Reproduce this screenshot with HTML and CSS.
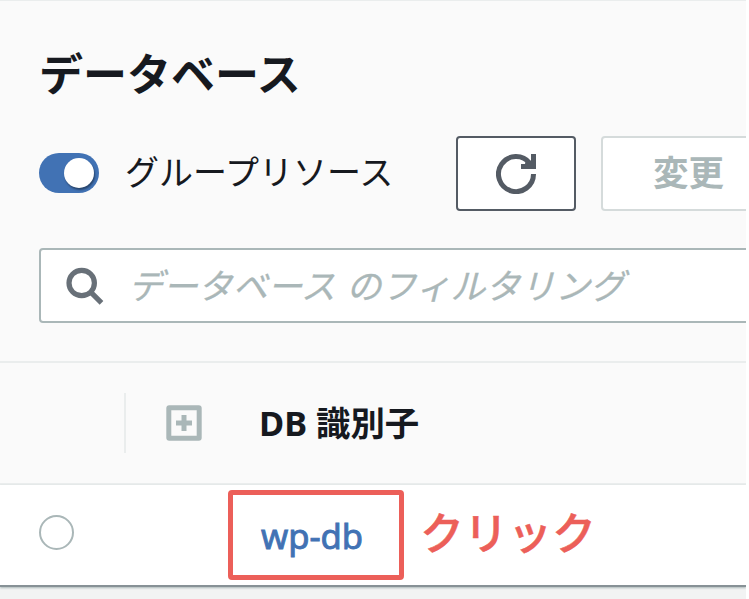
FILE: index.html
```html
<!DOCTYPE html>
<html lang="ja">
<head>
<meta charset="utf-8">
<title>データベース</title>
<link rel="stylesheet" href="styles.css">
</head>
<body>
<main class="panel">
  <header class="head">
    <h1 class="title">データベース</h1>
    <div class="actions">
      <span class="toggle"><span class="knob"></span></span>
      <span class="toggle-label">グループリソース</span>
      <button class="btn refresh" aria-label="更新">
        <svg width="40" height="40" viewBox="0 0 40 40" fill="none" stroke="#545b64" stroke-width="5">
          <path d="M37.5 20A17.5 17.5 0 1 1 33.8 9.3"/>
          <path d="M35 0H40V15H25V10H29L30 5L35 7Z" fill="#545b64" stroke="none"/>
        </svg>
      </button>
      <button class="btn modify" disabled>変更</button>
    </div>
    <div class="search">
      <svg class="search-icon" width="38" height="38" viewBox="0 0 38 38" fill="none" stroke="#687078" stroke-width="5.2">
        <circle cx="15.7" cy="16" r="12.7"/>
        <path d="M25 25.3L35.5 35.8"/>
      </svg>
      <span class="placeholder">データベース のフィルタリング</span>
    </div>
  </header>
  <div class="columns">
    <span class="divider"></span>
    <svg class="expand" width="36" height="36" viewBox="0 0 36 36" fill="none" stroke="#aab7b8" stroke-width="5">
      <rect x="2.8" y="2.8" width="30.4" height="30.4" rx=".5"/>
      <path d="M10 18H26M18 10V26"/>
    </svg>
    <span class="column-name">DB 識別子</span>
  </div>
  <div class="row">
    <span class="radio"></span>
    <a class="link">wp-db</a>
    <span class="note">クリック</span>
  </div>
</main>
</body>
</html>
```
FILE: styles.css
```css
* { box-sizing: border-box; }
body {
  margin: 0;
  height: 599px;
  overflow: hidden;
  background: #fff;
  color: #16191f;
  font-family: "Noto Sans", "Noto Sans CJK JP", sans-serif;
}
.panel {
  width: 746px;
  height: 599px;
  overflow: hidden;
  background: #f2f3f3;
}
.head {
  height: 363px;
  padding: 44px 0 0 39px;
  background: #fafafa;
  border-top: 1px solid #eaeded;
  border-bottom: 2px solid #eaeded;
}
.title {
  margin: 0;
  height: 91px;
  font: bold 44px/54px "Noto Sans CJK JP", sans-serif;
}
.actions { display: flex; align-items: center; height: 75px; }
.toggle {
  flex: none;
  display: flex;
  justify-content: flex-end;
  width: 60px;
  height: 40px;
  margin-top: -1px;
  padding: 5px;
  border-radius: 20px;
  background: #4172b4;
}
.knob {
  width: 30px;
  height: 30px;
  border-radius: 50%;
  background: #fff;
  box-shadow: 1px 2px 2px rgba(0, 0, 0, .4);
}
.toggle-label {
  flex: none;
  width: 331px;
  height: 56px;
  margin-left: 26px;
  font: 34px/50px "Noto Sans CJK JP", sans-serif;
  white-space: nowrap;
}
.btn {
  flex: none;
  display: flex;
  align-items: center;
  height: 75px;
  padding: 0;
  border: 2px solid #545b64;
  border-radius: 4px;
  background: #fff;
}
.refresh { width: 120px; justify-content: center; }
.modify {
  width: 170px;
  margin-left: 25px;
  padding: 0 0 5px 50px;
  border-color: #d5dbdb;
  color: #aab7b8;
  font: bold 35.5px/50px "Noto Sans CJK JP", sans-serif;
}
.search {
  display: flex;
  align-items: center;
  width: 760px;
  height: 75px;
  margin-top: 37px;
  padding-left: 25px;
  border: 2px solid #aab7b8;
  border-radius: 4px;
  background: #fff;
}
.placeholder {
  height: 53px;
  margin-left: 24px;
  color: #aab7b8;
  font: italic 34.8px/50px "Noto Sans CJK JP", sans-serif;
  word-spacing: 3px;
  letter-spacing: .1px;
  -webkit-text-stroke: .3px;
  white-space: nowrap;
}
.columns {
  display: flex;
  align-items: center;
  height: 122px;
  padding-left: 124px;
  background: #fafafa;
  border-bottom: 2px solid #eaeded;
}
.divider { width: 2px; height: 60px; background: #eaeded; }
.expand { margin-left: 40px; }
.column-name {
  margin-left: 57px;
  font-size: 34.4px;
  font-weight: bold;
  line-height: 50px;
}
.row {
  display: flex;
  height: 102px;
  padding: 5px 0 0 39px;
  background: #fff;
  border-bottom: 2px solid #879196;
  box-shadow: 0 1px 2px #aab7b8;
}
.radio {
  width: 35px;
  height: 35px;
  margin-top: 25px;
  border: 2px solid #aab7b8;
  border-radius: 50%;
}
.link {
  width: 176px;
  height: 90px;
  margin-left: 154px;
  padding-left: 28px;
  border: 5px solid #ec5f59;
  border-radius: 4px;
  color: #4172b4;
  font-size: 34.6px;
  -webkit-text-stroke: .9px;
  line-height: 81px;
}
.note {
  margin-left: 16px;
  color: #ec5f59;
  font: 500 44px/82px "Noto Sans CJK JP", sans-serif;
  -webkit-text-stroke: .5px;
}
```
